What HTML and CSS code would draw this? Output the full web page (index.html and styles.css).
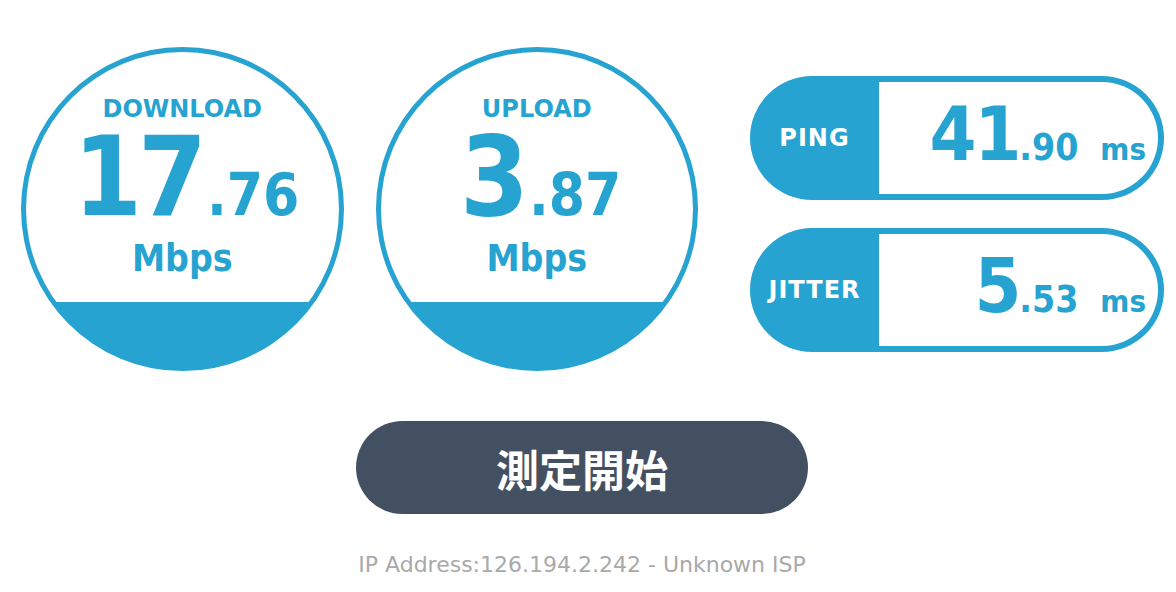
FILE: index.html
```html
<!DOCTYPE html>
<html lang="ja">
  <head>
    <meta charset="UTF-8" />
    <meta name="viewport" content="width=device-width, initial-scale=1.0" />
    <title>スピードテスト</title>
    <link rel="stylesheet" href="styles.css">
  </head>
  <body>
    <div class="container">
      <div class="results">
        <div class="gauge">
          <div class="gauge-label">DOWNLOAD</div>
          <div class="gauge-value"><span class="int">17</span><span class="dec">.76</span></div>
          <div class="gauge-unit">Mbps</div>
        </div>
        <div class="gauge">
          <div class="gauge-label">UPLOAD</div>
          <div class="gauge-value"><span class="int">3</span><span class="dec">.87</span></div>
          <div class="gauge-unit">Mbps</div>
        </div>
        <div class="stats">
          <div class="stat">
            <div class="stat-label">PING</div>
            <div class="stat-value"><span class="int">41</span><span class="dec">.90</span><span class="unit">ms</span></div>
          </div>
          <div class="stat">
            <div class="stat-label">JITTER</div>
            <div class="stat-value"><span class="int">5</span><span class="dec">.53</span><span class="unit">ms</span></div>
          </div>
        </div>
      </div>
      <button type="button" class="start">測定開始</button>
      <p class="ip">IP Address:126.194.2.242 - Unknown ISP</p>
    </div>
  </body>
</html>
```
FILE: styles.css
```css
body {
  margin: 0;
  background: #fff;
  font-family: "DejaVu Sans", sans-serif;
}
.container {
  width: 1164px;
}
.results {
  display: flex;
  align-items: flex-start;
  padding: 47px 0 0 21px;
}
/* the filled bottom part is drawn with the background so it meets the ring without a seam */
.gauge {
  width: 324px;
  height: 324px;
  box-sizing: border-box;
  border: 5px solid #26a3d1;
  border-radius: 50%;
  background: linear-gradient(to bottom, #fff 255px, #26a3d1 255px);
  background-origin: border-box;
  display: flex;
  flex-direction: column;
  align-items: center;
  color: #26a3d1;
  font-weight: bold;
  margin-right: 32px;
}
.gauge + .gauge {
  margin-right: 52px;
}
.gauge-label {
  font-size: 24px;
  line-height: 1;
  margin-top: 45px;
}
.gauge-value {
  font-family: "DejaVu Sans Condensed", "DejaVu Sans", sans-serif;
  font-size: 110px;
  line-height: 1;
  margin-top: 1px;
  margin-left: 8px;
}
.gauge-value .int {
  letter-spacing: -4px;
}
.gauge-value .dec {
  font-size: 58px;
  margin-left: 4px;
}
.gauge-unit {
  font-family: "DejaVu Sans Condensed", "DejaVu Sans", sans-serif;
  font-size: 37px;
  line-height: 1;
  margin-top: 8px;
}
.stats {
  display: flex;
  flex-direction: column;
  gap: 28px;
  margin-top: 29px;
}
.stat {
  width: 414px;
  height: 124px;
  box-sizing: border-box;
  padding: 6px 6px 6px 0;
  border-radius: 62px;
  background: #26a3d1;
  display: flex;
}
.stat-label {
  width: 129px;
  color: #fff;
  font-weight: bold;
  font-size: 24px;
  letter-spacing: 1px;
  display: flex;
  align-items: center;
  justify-content: center;
}
.stat-value {
  flex: 1;
  background: #fff;
  border-radius: 0 56px 56px 0;
  text-align: right;
  padding: 15px 12px 0 0;
  color: #26a3d1;
  font-family: "DejaVu Sans Condensed", "DejaVu Sans", sans-serif;
  font-weight: bold;
  font-size: 75px;
  line-height: 1;
}
.stat-value .int {
  letter-spacing: -2px;
}
.stat-value .dec {
  font-size: 37px;
}
.stat-value .unit {
  font-size: 31px;
  margin-left: 22px;
}
.start {
  display: block;
  width: 452px;
  height: 93px;
  margin: 50px auto 0;
  border: none;
  border-radius: 47px;
  background: #425062;
  color: #fff;
  font-family: "Noto Sans CJK JP", sans-serif;
  font-weight: bold;
  font-size: 43px;
  cursor: pointer;
}
.ip {
  margin: 40px 0 0;
  text-align: center;
  color: #a9a9a9;
  font-size: 22px;
  line-height: 1;
}
```
